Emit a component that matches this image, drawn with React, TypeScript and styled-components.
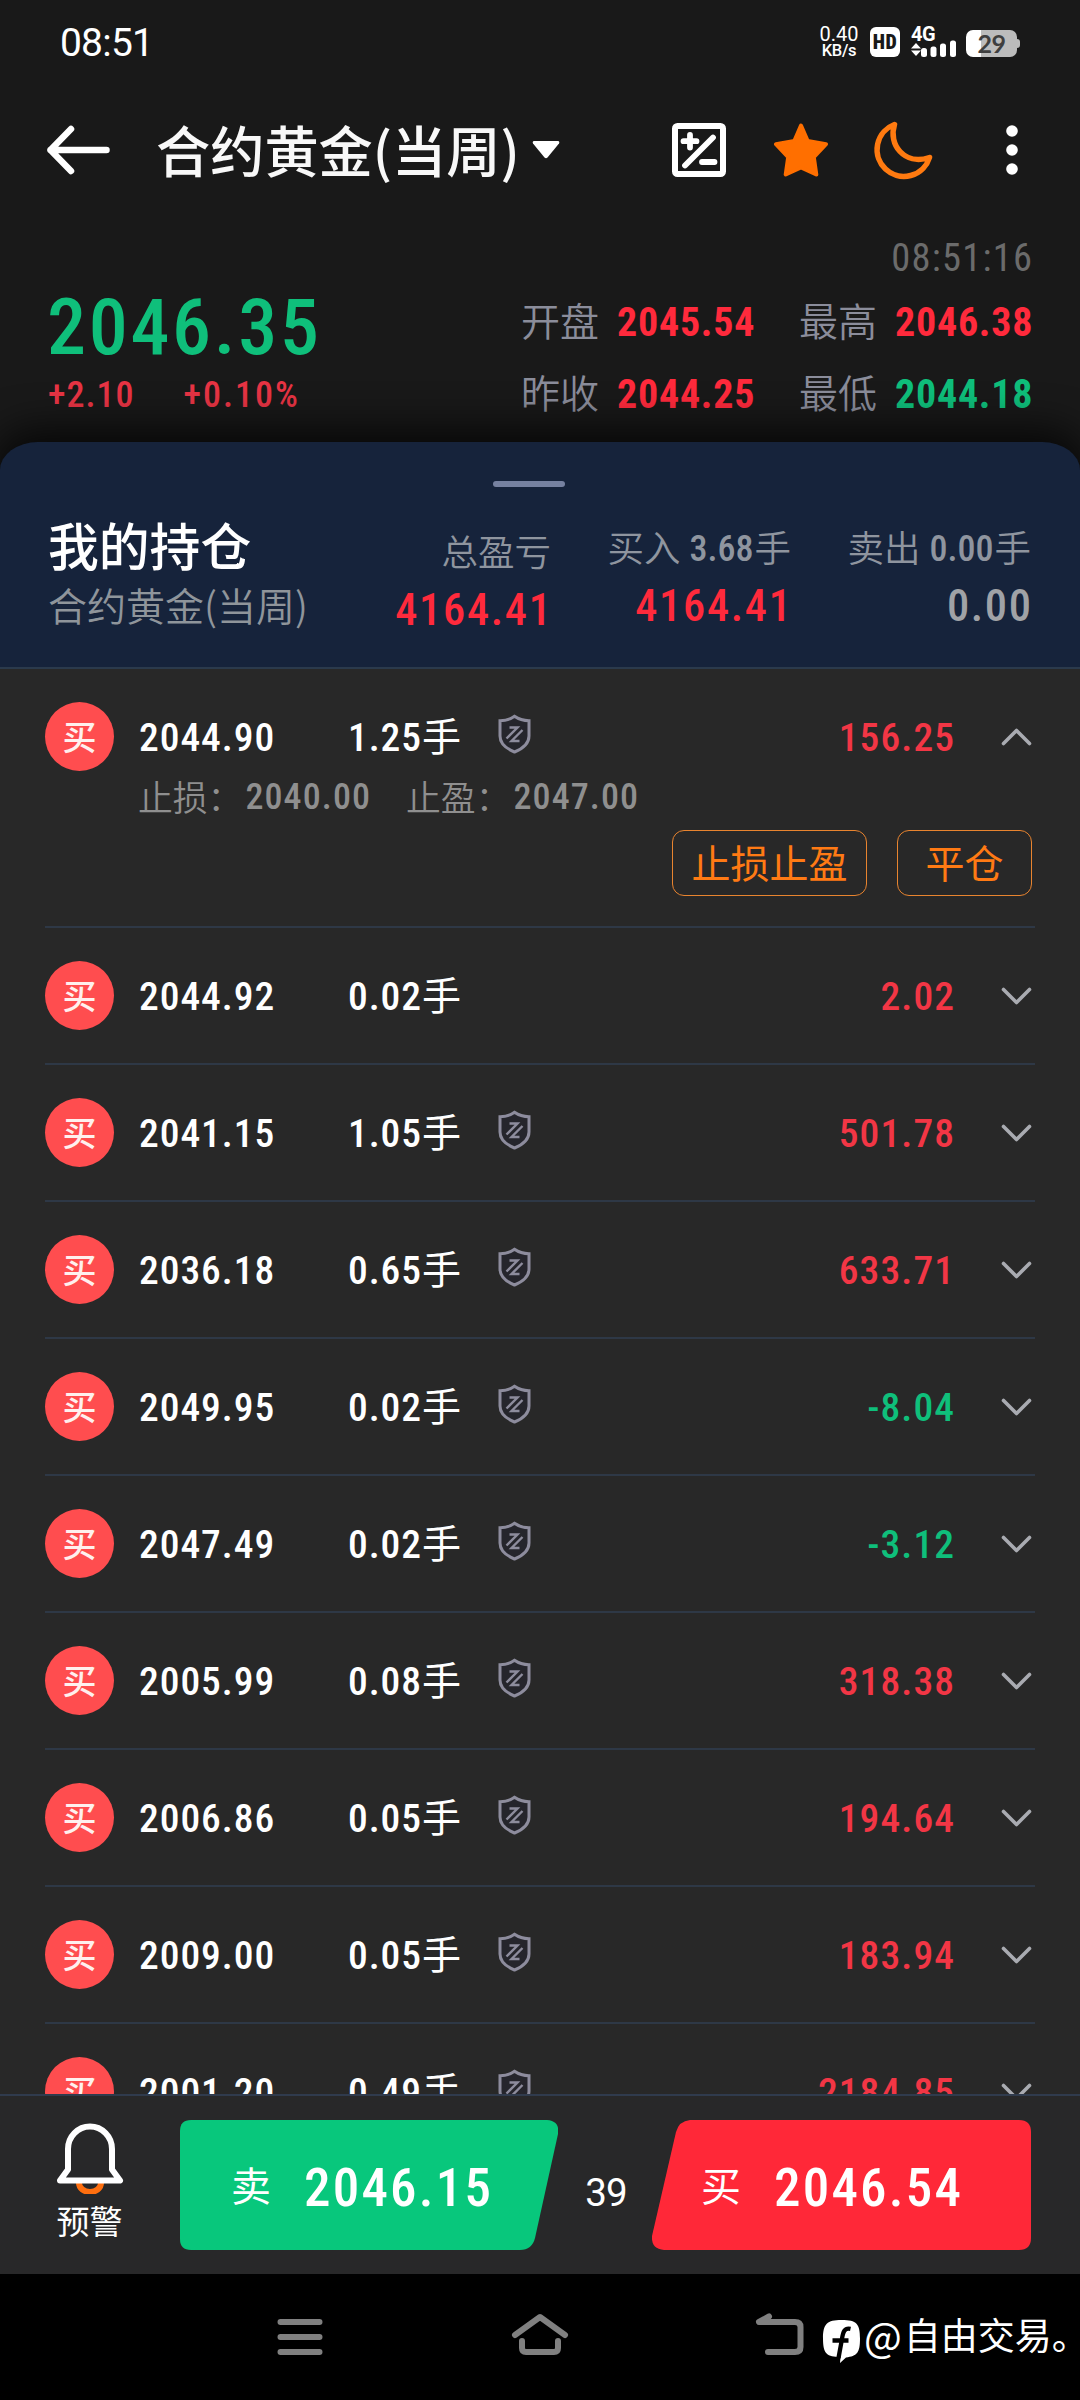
import React from 'react';
import styled, { createGlobalStyle } from 'styled-components';

const RED = '#ff2a3c';
const GREEN = '#0fbf7b';
const ORANGE = '#ff6f00';

const Global = createGlobalStyle`
  * { box-sizing: border-box; }
  body { margin: 0; background: #000; }
`;

const Screen = styled.div`
  width: 1080px;
  height: 2400px;
  display: flex;
  flex-direction: column;
  overflow: hidden;
  background: #191919;
  color: #fff;
  font-family: Roboto, 'Noto Sans CJK SC', sans-serif;
  white-space: nowrap;
`;

/* Condensed figures; the trailing letter space is taken back so that edges align. */
const Num = styled.span<{ $size: number; $weight?: number; $color?: string; $ls?: number }>`
  font-size: ${p => p.$size}px;
  font-weight: ${p => p.$weight ?? 500};
  font-stretch: 75%;
  color: ${p => p.$color ?? 'inherit'};
  letter-spacing: ${p => p.$ls ?? 0}px;
  margin-right: ${p => -(p.$ls ?? 0)}px;
`;

const Cjk = styled.span<{ $size: number; $weight?: number; $color?: string }>`
  font-family: 'Noto Sans CJK SC', sans-serif;
  font-size: ${p => p.$size}px;
  font-weight: ${p => p.$weight ?? 400};
  color: ${p => p.$color ?? 'inherit'};
  line-height: 1;
`;

/* ---------- status bar ---------- */

const StatusBar = styled.header`
  height: 83px;
  padding: 27px 60px 0 60px;
  display: flex;
  align-items: flex-start;
  line-height: 30px;
`;

const Clock = styled.span`
  margin-right: auto;
  font-size: 39px;
  line-height: 32px;
  letter-spacing: -0.8px;
`;

const NetSpeed = styled.div`
  width: 40px;
  margin-right: 11px;
  display: flex;
  flex-direction: column;
  align-items: center;
  span:first-child { font-size: 20px; line-height: 15px; }
  span:last-child { font-size: 16.5px; line-height: 18px; font-weight: 500; letter-spacing: -0.3px; }
`;

const HdBadge = styled.div`
  width: 30px;
  height: 30px;
  margin-right: 11px;
  border-radius: 6px;
  background: #fff;
  color: #191919;
  font-size: 20px;
  font-weight: 900;
  font-stretch: 75%;
  letter-spacing: 0.5px;
  text-align: center;
`;

const Signal = styled.div`
  width: 46px;
  height: 30px;
  margin-right: 9px;
  display: flex;
  flex-direction: column;
  span { font-size: 20px; font-weight: 700; line-height: 15px; letter-spacing: -0.5px; height: 13px; }
  svg { display: block; }
`;

const Battery = styled.div`
  width: 51px;
  height: 27px;
  margin-top: 3px;
  border-radius: 7px;
  background: linear-gradient(90deg, #fff 15px, #bcbcbc 15px);
  color: #3f3f3f;
  font: 700 25px/27px Lato, sans-serif;
  text-align: center;
  letter-spacing: -0.5px;
`;

const BatteryNub = styled.div`
  width: 3px;
  height: 9px;
  margin-top: 12px;
  border-radius: 0 3px 3px 0;
  background: #bcbcbc;
`;

/* ---------- title bar ---------- */

const TitleBar = styled.nav`
  height: 133px;
  padding: 0 48px 0 46px;
  display: flex;
  align-items: center;
`;

const Title = styled(Cjk)`
  margin: 0 12px 0 46px;
`;

const Tools = styled.div`
  margin-left: auto;
  display: flex;
  align-items: center;
`;

const CalcIcon = styled.svg` margin-right: 48px; `;
const StarIcon = styled.svg` margin-right: 46px; `;
const MoonIcon = styled.svg` margin-right: 72px; overflow: visible; `;
const MoreIcon = styled.svg` margin-right: 14px; `;

/* ---------- quote ---------- */

const Quote = styled.section`
  height: 226px;
  padding: 12px 48px 0 47px;
  display: flex;
  justify-content: space-between;
`;

const LastPrice = styled.div`
  padding-top: 60px;
  display: flex;
  flex-direction: column;
`;

const PriceLine = styled.div`
  line-height: 80px;
  height: 79px;
`;

const ChangeLine = styled.div`
  display: flex;
  gap: 50px;
  padding-left: 1px;
  line-height: 56px;
`;

const Stats = styled.div`
  width: 511px;
`;

const QuoteTime = styled.div`
  height: 58px;
  line-height: 60px;
  text-align: right;
`;

const StatGrid = styled.div`
  display: grid;
  grid-template-columns: 96px 182px 96px auto;
  grid-auto-rows: 72px;
  align-items: center;
`;

const StatLabel = styled(Cjk)`
  padding-bottom: 6px;
`;

/* ---------- positions sheet ---------- */

const SheetHead = styled.section`
  height: 227px;
  padding: 39px 49px 0 48px;
  border-bottom: 2px solid #2b3a4c;
  border-radius: 38px 38px 0 0 / 28px 28px 0 0;
  background: #16233b;
  box-shadow: 0 -8px 40px 4px rgba(0, 0, 0, 0.75);
`;

const Handle = styled.div`
  width: 72px;
  height: 6px;
  margin-left: 445px;
  border-radius: 3px;
  background: #7681a0;
`;

const Summary = styled.div`
  margin-top: 24px;
  display: grid;
  grid-template-columns: 1fr 240px 240px;
`;

const SummaryLeft = styled.div`
  display: flex;
  justify-content: space-between;
`;

const SheetTitle = styled.div`
  display: flex;
  flex-direction: column;
  padding-top: 8px;
  gap: 15px;
`;

const Figure = styled.div<{ $drop?: number }>`
  display: flex;
  flex-direction: column;
  align-items: flex-end;
  padding-top: ${p => p.$drop ?? 10}px;
  line-height: 57px;
  color: #8f959f;
`;

const FigureLabel = styled.div`
  height: 57px;
  display: flex;
  align-items: center;
`;

const FigureWord = styled(Cjk)`
  padding-bottom: 4px;
`;

const FigureNum = styled(Num)`
  margin-left: 9px;
  margin-right: 1px;
`;

const List = styled.main`
  position: relative;
  flex: 1;
  min-height: 0;
  overflow: hidden;
  padding: 0 45px;
  background: #282828;
`;

const Row = styled.article`
  border-bottom: 2px solid #2e3846;
`;

const RowMain = styled.div`
  height: 135px;
  padding-right: 3px;
  display: flex;
  align-items: center;
`;

const Side = styled.div`
  width: 69px;
  height: 69px;
  margin-right: 24px;
  padding-bottom: 2px;
  border-radius: 50%;
  background: #ff4d4f;
  display: flex;
  align-items: center;
  justify-content: center;
`;

const Open = styled.div`
  width: 160px;
  padding: 2px 0 0 1px;
`;

const Volume = styled.div`
  width: 163px;
  margin-right: 37px;
  display: flex;
  align-items: center;
  justify-content: flex-end;
  padding-top: 2px;
`;

const Unit = styled(Cjk)`
  padding-bottom: 7px;
  margin-left: 1px;
`;

const Profit = styled.div`
  margin-left: auto;
  margin-right: 47px;
  padding-top: 2px;
`;

const Detail = styled.div`
  height: 54px;
  margin-top: -34px;
  padding-left: 93px;
  display: flex;
  align-items: center;
  gap: 36px;
  color: #8f8f8f;
`;

const DetailItem = styled.div`
  display: flex;
  align-items: center;
`;

const DetailLabel = styled(Cjk)`
  margin-right: 3px;
  padding-bottom: 2px;
`;

const Actions = styled.div`
  display: flex;
  justify-content: flex-end;
  gap: 30px;
  margin-top: 6px;
  padding: 0 3px 30px 0;
`;

const Outline = styled.button<{ $w: number }>`
  width: ${p => p.$w}px;
  height: 66px;
  padding: 0 0 4px;
  border: 1px solid #e8842f;
  border-radius: 12px;
  background: none;
  color: #ff7a14;
`;

/* ---------- trade bar ---------- */

const TradeBar = styled.footer`
  height: 180px;
  padding: 24px 49px 24px 45px;
  border-top: 2px solid #303b4d;
  background: #282829;
  display: flex;
`;

const Alert = styled.div`
  width: 89px;
  margin-right: 46px;
  display: flex;
  flex-direction: column;
  align-items: center;
  padding-top: 3px;
  gap: 10px;
`;

const SellButton = styled.div`
  width: 378px;
  height: 130px;
  padding-left: 51px;
  display: flex;
  align-items: center;
  background: #08c77c;
  clip-path: path('M11 0H367Q380 1 378 14L355 118Q352 130 340 130H11Q0 130 0 119V11Q0 0 11 0Z');
`;

const BuyButton = styled.div`
  width: 379px;
  height: 130px;
  padding-left: 49px;
  display: flex;
  align-items: center;
  background: #ff2838;
  clip-path: path('M38 0H367Q379 0 379 12V118Q379 130 367 130H12Q-1 129 0 116L24 12Q27 1 38 0Z');
`;

const TradeSide = styled(Cjk)`
  padding-bottom: 2px;
`;

const Quantity = styled.div`
  width: 94px;
  padding: 8px 0 0 2px;
  font-size: 38.5px;
  line-height: 130px;
  letter-spacing: -1px;
  text-align: center;
`;

const TradePrice = styled(Num)`
  margin-left: 33px;
  padding-top: 5px;
`;

/* ---------- system navigation ---------- */

const NavBar = styled.div`
  height: 126px;
  padding-left: 277px;
  background: #000;
  display: flex;
  align-items: center;
  svg { flex: none; overflow: visible; }
`;

const MenuIcon = styled.svg` margin-right: 189px; `;
const HomeIcon = styled.svg` margin-right: 187px; `;
const ReturnIcon = styled.svg` margin-right: 18px; `;
const BrandIcon = styled.svg` margin-top: 9px; `;

const At = styled.span`
  margin: -5px 2px 0 4px;
  font-family: 'Noto Sans CJK SC', sans-serif;
  font-size: 40px;
  line-height: 1;
`;

const Author = styled(Cjk)`
  margin-top: -5px;
`;

const Chevron = ({ up }: { up?: boolean }) => (
  <svg width="31" height="18" viewBox="0 0 31 18" fill="none" stroke="#a9abb1" strokeWidth="3.6" strokeLinecap="round" strokeLinejoin="round">
    <path d={up ? 'M2.5 15.5L15.5 2.5L28.5 15.5' : 'M2.5 2.5L15.5 15.5L28.5 2.5'} />
  </svg>
);

const ShieldIcon = styled.svg`
  margin-top: -5px;
`;

const Shield = () => (
  <ShieldIcon width="33" height="40" viewBox="0 0 33 40" fill="none" stroke="#8d8c9d" strokeWidth="3">
    <path d="M16.500 2.300C12 5.500 7.500 6.700 2 6.700V22C2 29.500 8 34.500 16.500 38C25 34.500 31 29.500 31 22V6.700C25.500 6.700 21 5.500 16.500 2.300Z" fill="#25252c" />
    <path d="M11.500 13.500H19.500L8.500 24.500M24.500 16L13.500 27H21.500" strokeWidth="2.400" />
  </ShieldIcon>
);

type Position = { open: string; volume: string; profit: string; shield: boolean };

const positions: Position[] = [
  { open: '2044.90', volume: '1.25', profit: '156.25', shield: true },
  { open: '2044.92', volume: '0.02', profit: '2.02', shield: false },
  { open: '2041.15', volume: '1.05', profit: '501.78', shield: true },
  { open: '2036.18', volume: '0.65', profit: '633.71', shield: true },
  { open: '2049.95', volume: '0.02', profit: '-8.04', shield: true },
  { open: '2047.49', volume: '0.02', profit: '-3.12', shield: true },
  { open: '2005.99', volume: '0.08', profit: '318.38', shield: true },
  { open: '2006.86', volume: '0.05', profit: '194.64', shield: true },
  { open: '2009.00', volume: '0.05', profit: '183.94', shield: true },
  { open: '2001.20', volume: '0.49', profit: '2184.85', shield: true },
];

const stats: [string, string, string][] = [
  ['开盘', '2045.54', RED],
  ['最高', '2046.38', RED],
  ['昨收', '2044.25', RED],
  ['最低', '2044.18', GREEN],
];

const PositionRow = ({ p, expanded }: { p: Position; expanded?: boolean }) => (
  <Row>
    <RowMain>
      <Side><Cjk $size={34} $weight={500} $color="#fff0ee">买</Cjk></Side>
      <Open><Num $size={39.5} $ls={0.95}>{p.open}</Num></Open>
      <Volume>
        <Num $size={39.5} $ls={0.9}>{p.volume}</Num>
        <Unit $size={39}>手</Unit>
      </Volume>
      {p.shield && <Shield />}
      <Profit>
        <Num $size={39.5} $ls={1.1} $color={p.profit.startsWith('-') ? GREEN : '#f23645'}>{p.profit}</Num>
      </Profit>
      <Chevron up={expanded} />
    </RowMain>
    {expanded && (
      <>
        <Detail>
          <DetailItem><DetailLabel $size={34.8} $weight={350}>止损：</DetailLabel><Num $size={36} $ls={1.1}>2040.00</Num></DetailItem>
          <DetailItem><DetailLabel $size={34.8} $weight={350}>止盈：</DetailLabel><Num $size={36} $ls={1.1}>2047.00</Num></DetailItem>
        </Detail>
        <Actions>
          <Outline $w={195}><Cjk $size={39}>止损止盈</Cjk></Outline>
          <Outline $w={135}><Cjk $size={39}>平仓</Cjk></Outline>
        </Actions>
      </>
    )}
  </Row>
);

export default function App() {
  return (
    <Screen>
      <Global />
      <StatusBar>
        <Clock>08:51</Clock>
        <NetSpeed><span>0.40</span><span>KB/s</span></NetSpeed>
        <HdBadge>HD</HdBadge>
        <Signal>
          <span>4G</span>
          <svg width="46" height="17" viewBox="0 0 46 17" fill="#fff">
            <path d="M5 3L10 8.500H0ZM0 10.500H10L5 16Z" />
            <rect x="10" y="8" width="6" height="9" rx="2.500" />
            <rect x="19.500" y="6.500" width="6" height="10.500" rx="2.500" />
            <rect x="29" y="3.500" width="6" height="13.500" rx="2.500" />
            <rect x="39" y="0.500" width="6" height="16.500" rx="2.500" />
          </svg>
        </Signal>
        <Battery>29</Battery>
        <BatteryNub />
      </StatusBar>

      <TitleBar>
        <svg width="64" height="54" viewBox="0 0 64 54" fill="none" stroke="#fff" strokeWidth="6.500" strokeLinecap="round" strokeLinejoin="round">
          <path d="M60.500 27H4.500M25 6L4.500 27L25 48" />
        </svg>
        <Title $size={54.2} $weight={500} $color="#f8f8f8">合约黄金(当周)</Title>
        <svg width="28" height="18" viewBox="0 0 28 18" fill="#fff">
          <path d="M2 0H26Q28 .5 27 2.500L15.500 16.500Q14 18 12.500 16.500L1 2.500Q0 .5 2 0Z" />
        </svg>
        <Tools>
          <CalcIcon width="54" height="54" viewBox="0 0 54 54" fill="none" stroke="#fff" strokeWidth="6">
            <rect x="3" y="3" width="48" height="48" rx="2.500" />
            <path d="M18 12V24.500M11.500 18.200H24.500M13 42.500L41 14.500M30 39H42.500" strokeLinecap="round" strokeWidth="5.800" />
          </CalcIcon>
          <StarIcon width="54" height="54" viewBox="0 0 54 54" fill={ORANGE} stroke={ORANGE} strokeWidth="4" strokeLinejoin="round">
            <path d="M27 2.500L33.700 18L52 21.200L39.800 34L42.300 51.500L27 44.500L11.700 51.500L14.200 34L2 21.200L20.300 18Z" />
          </StarIcon>
          <MoonIcon width="60" height="60" viewBox="0 0 60 60" fill="none" stroke="#ff7a10" strokeWidth="5.500" strokeLinejoin="round">
            <path d="M20.500 4.500A26.800 26.800 0 1 0 55.500 37.500C30 46 14 24 20.500 4.500Z" />
          </MoonIcon>
          <MoreIcon width="12" height="52" viewBox="0 0 12 52" fill="#fff">
            <circle cx="6" cy="7" r="5.800" /><circle cx="6" cy="26" r="5.800" /><circle cx="6" cy="45" r="5.800" />
          </MoreIcon>
        </Tools>
      </TitleBar>

      <Quote>
        <LastPrice>
          <PriceLine><Num $size={78} $ls={2.7} $color={GREEN}>2046.35</Num></PriceLine>
          <ChangeLine>
            <Num $size={36} $color="#e83444" $ls={1}>+2.10</Num>
            <Num $size={36} $color="#e83444" $ls={2}>+0.10%</Num>
          </ChangeLine>
        </LastPrice>
        <Stats>
          <QuoteTime><Num $size={38.5} $weight={400} $color="#6b6b6b" $ls={1.25}>08:51:16</Num></QuoteTime>
          <StatGrid>
            {stats.map(([label, value, color]) => (
              <React.Fragment key={label}>
                <StatLabel $size={39} $weight={350} $color="#8b8d9b">{label}</StatLabel>
                <Num $size={40} $weight={700} $color={color} $ls={0.75}>{value}</Num>
              </React.Fragment>
            ))}
          </StatGrid>
        </Stats>
      </Quote>

      <SheetHead>
        <Handle />
        <Summary>
          <SummaryLeft>
            <SheetTitle>
              <Cjk $size={50.8} $weight={500}>我的持仓</Cjk>
              <Cjk $size={39} $color="#8f959b" $weight={350}>合约黄金(当周)</Cjk>
            </SheetTitle>
            <Figure $drop={14}>
              <FigureLabel><FigureWord $size={36.5} $weight={350}>总盈亏</FigureWord></FigureLabel>
              <Num $size={44.5} $color={RED} $ls={1.65}>4164.41</Num>
            </Figure>
          </SummaryLeft>
          <Figure>
            <FigureLabel>
              <FigureWord $size={36.5} $weight={350}>买入</FigureWord>
              <FigureNum $size={36} $ls={0}>3.68</FigureNum>
              <FigureWord $size={36.5} $weight={350}>手</FigureWord>
            </FigureLabel>
            <Num $size={44.5} $color={RED} $ls={1.65}>4164.41</Num>
          </Figure>
          <Figure>
            <FigureLabel>
              <FigureWord $size={36.5} $weight={350}>卖出</FigureWord>
              <FigureNum $size={36} $ls={0}>0.00</FigureNum>
              <FigureWord $size={36.5} $weight={350}>手</FigureWord>
            </FigureLabel>
            <Num $size={44.5} $color="#a0a2a6" $ls={1.65}>0.00</Num>
          </Figure>
        </Summary>
      </SheetHead>

      <List>
        {positions.map((p, i) => <PositionRow key={p.open} p={p} expanded={i === 0} />)}
      </List>

      <TradeBar>
        <Alert>
          <svg width="68" height="71" viewBox="0 0 68 71" fill="none" strokeWidth="6" strokeLinejoin="round">
            <path d="M23 60A11 9 0 0 0 45 60" stroke="#ff6f0f" />
            <path d="M4 57.500L12 46.500V26A22 22.500 0 0 1 56 26V46.500L64 57.500Z" stroke="#fff" />
          </svg>
          <Cjk $size={33}>预警</Cjk>
        </Alert>
        <SellButton>
          <TradeSide $size={40}>卖</TradeSide>
          <TradePrice $size={53} $ls={2.2}>2046.15</TradePrice>
        </SellButton>
        <Quantity>39</Quantity>
        <BuyButton>
          <TradeSide $size={40}>买</TradeSide>
          <TradePrice $size={53} $ls={2.2}>2046.54</TradePrice>
        </BuyButton>
      </TradeBar>

      <NavBar>
        <MenuIcon width="46" height="38" viewBox="0 0 46 38" stroke="#808080" strokeWidth="6" strokeLinecap="round">
          <path d="M3.500 4H42.500M3.500 19H42.500M3.500 34H42.500" />
        </MenuIcon>
        <HomeIcon width="56" height="46" viewBox="0 0 56 46" fill="none" stroke="#808080" strokeWidth="6" strokeLinecap="round" strokeLinejoin="round">
          <path d="M3 21L28 3L53 21M10 27V34Q10 38 14 38H42Q46 38 46 34V27" />
        </HomeIcon>
        <ReturnIcon width="50" height="44" viewBox="0 0 50 44" fill="none" stroke="#808080" strokeWidth="6" strokeLinecap="round" strokeLinejoin="round">
          <path d="M14 1.500L4 7H40Q45.500 7 45.500 12V32Q45.500 37 40 37H13" />
        </ReturnIcon>
        <BrandIcon width="37" height="44" viewBox="0 0 37 44">
          <path d="M18.500 0C34 0 37 4 37 18.500C37 33 34 36 23 37.500L17 43L17.500 37C4 37 0 34 0 18.500C0 4 4 0 18.500 0Z" fill="#fff" />
          <path d="M27.500 8.800C21.500 7.500 20 12 19 19L15.500 38M9.500 20.500H25.500" fill="none" stroke="#000" strokeWidth="4.300" />
        </BrandIcon>
        <At>@</At>
        <Author $size={37}>自由交易。</Author>
      </NavBar>
    </Screen>
  );
}
